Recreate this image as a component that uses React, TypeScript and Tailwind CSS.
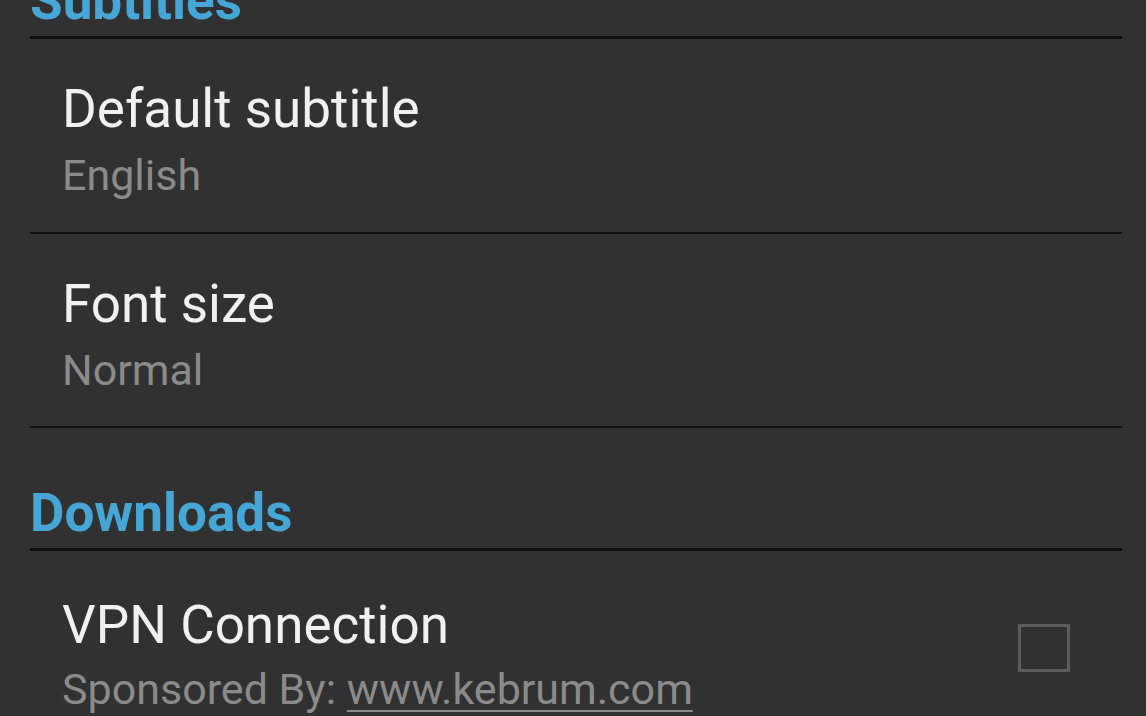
import React from 'react';

const font = { fontFamily: 'Roboto, "Noto Sans", sans-serif' };

type PrefProps = {
  title: string;
  summary: React.ReactNode;
  className?: string;
};

const Pref: React.FC<PrefProps> = ({ title, summary, className }) => (
  <div className={className}>
    <div className="pl-[32px] text-[53px] leading-none text-[#f1f1f1]">{title}</div>
    <div className="pl-[32px] mt-[18px] text-[43px] leading-none text-[#8b8b8b]">{summary}</div>
  </div>
);

export default function App() {
  return (
    <div
      className="h-[716px] w-[1146px] overflow-hidden bg-[#313131] pl-[30px] pr-[24px]"
      style={font}
    >
      {/* Subtitles (scrolled partly off screen) */}
      <div className="mt-[-25px] text-[53px] font-bold leading-none text-[#46a6d6]">Subtitles</div>
      <div className="mt-[8px] h-[3px] bg-[#0d0d0d]" />

      <Pref className="pt-[44px]" title="Default subtitle" summary="English" />
      <div className="mt-[35px] h-[2px] bg-[#111]" />

      <Pref className="pt-[44px]" title="Font size" summary="Normal" />
      <div className="mt-[34px] h-[2px] bg-[#111]" />

      {/* Downloads */}
      <div className="mt-[59px] text-[53px] font-bold leading-none text-[#46a6d6]">Downloads</div>
      <div className="mt-[8px] h-[3px] bg-[#0d0d0d]" />

      <div className="flex justify-between pt-[48px]">
        <div>
          <div className="pl-[32px] text-[53px] leading-none text-[#f1f1f1]">VPN Connection</div>
          <div className="pl-[32px] mt-[16px] text-[43px] leading-none text-[#8b8b8b] whitespace-nowrap">
            Sponsored By: <span className="underline decoration-2 underline-offset-[6px]">www.kebrum.com</span>
          </div>
        </div>
        <div className="mr-[52px] mt-[25px] h-[48px] w-[52px] border-[3px] border-[#5c5c5c]" />
      </div>
    </div>
  );
}
